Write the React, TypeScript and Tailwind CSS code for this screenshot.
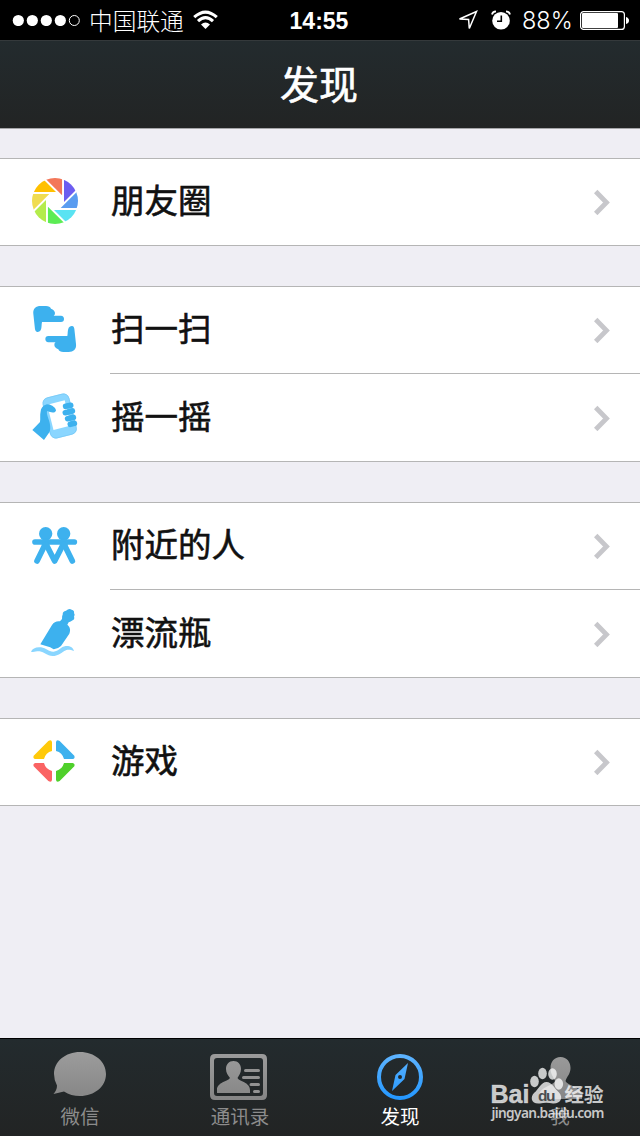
import type { ReactNode } from "react";

const PETALS = ["#6d5df0", "#5a9cf0", "#5ae3f2", "#5cec54", "#b4ec4c", "#f0dc50", "#ffc000", "#f37759"];

function Icon({ viewBox, children }: { viewBox: string; children: ReactNode }) {
  return (
    <svg viewBox={viewBox} className="h-12 w-12 shrink-0 overflow-visible">
      {children}
    </svg>
  );
}

function MomentsIcon() {
  return (
    <Icon viewBox="30 39 144 144">
      <clipPath id="disc">
        <circle cx="105" cy="108" r="69" />
      </clipPath>
      <g clipPath="url(#disc)">
        {PETALS.map((color, i) => (
          <path key={color} d="M27 3V-80H110Z" fill={color} transform={`translate(105 108) rotate(${i * 45})`} />
        ))}
      </g>
    </Icon>
  );
}

function ScanIcon() {
  const hand =
    "M40 72C38 56 48 48 62 48H78Q90 48 93 56Q104 60 105 69Q105 76 101 77H123Q132 78 132 87Q132 96 123 96H66C64 104 66 112 62 121Q58 127 51 126Q46 125 45 118Z";
  return (
    <Icon viewBox="30 48 144 144">
      <g fill="#3db1ee">
        <path d={hand} />
        <path d={hand} transform="rotate(180 104 117)" />
      </g>
    </Icon>
  );
}

function ShakeIcon() {
  return (
    <Icon viewBox="30 312 144 144">
      <g transform="rotate(-14 119 378)">
        <rect x="78" y="315" width="82" height="126" rx="18" fill="#8ad6ff" />
        <rect x="79" y="316" width="80" height="124" rx="17" fill="none" stroke="#74c6f4" strokeWidth="2" />
        <path d="M91 336H145V414H91Z" fill="#fff" />
      </g>
      <path
        d="M37 420L60 396C62 385 59 378 62 364C64 350 74 343 85 343C96 345 108 354 108 362C104 370 93 368 81 363C79 374 86 384 89 398C92 412 91 421 88 427L72 450Z"
        fill="#3db1ee"
      />
      <g stroke="#3db1ee" strokeWidth="17" strokeLinecap="round">
        <path d="M137 349L152 346" />
        <path d="M136 368L157 363" />
        <path d="M143 386L160 382" />
        <path d="M151 403L163 400" />
      </g>
    </Icon>
  );
}

function PeopleIcon() {
  return (
    <Icon viewBox="30 66 144 144">
      <g fill="#3db1ee">
        <circle cx="77" cy="101" r="20" />
        <circle cx="131" cy="101" r="20" />
        <path d="M68 116H86V130H68ZM122 116H140V130H122Z" />
        <path d="M65 130H89L84 150L76 146L67 150ZM119 130H143L141 150L132 146L124 150Z" />
      </g>
      <g stroke="#3db1ee" strokeWidth="17" strokeLinecap="round" strokeLinejoin="round" fill="none">
        <path d="M45 126H163" />
        <path d="M75 134L51 183" />
        <path d="M79 134L104 183L129 134" />
        <path d="M133 134L157 183" />
      </g>
    </Icon>
  );
}

function BottleIcon() {
  return (
    <Icon viewBox="30 330 144 144">
      <path
        d="M61 433L96 375C102 366 109 363 120 364L126 357C127 352 125 350 128 344C128 336 131 333 138 332Q147 324 155 329Q164 331 162 339Q166 344 162 350Q165 357 158 361Q152 366 146 367L142 374C151 381 152 391 148 401L123 438Q112 448 101 448C87 438 74 438 61 433Z"
        fill="#3db1ee"
      />
      <path
        d="M33 455C37 445 49 440 63 442C80 445 86 456 101 455C115 454 123 440 137 438C150 437 160 443 162 453C150 449 143 447 133 453C120 461 114 468 98 468C80 468 73 456 59 454C49 453 41 458 33 455Z"
        fill="#8ad6ff"
      />
    </Icon>
  );
}

function GamesIcon() {
  const piece = "M-6 -56V-30Q-25 -25 -30 -6H-56Q-64 -8 -61 -16L-17 -60Q-7 -66 -6 -56Z";
  return (
    <Icon viewBox="30 84 144 144">
      <g transform="translate(102 153)">
        <path d={piece} fill="#ffc90a" />
        <path d={piece} fill="#3db1ee" transform="scale(-1 1)" />
        <path d={piece} fill="#fa6363" transform="scale(1 -1)" />
        <path d={piece} fill="#4fd02b" transform="scale(-1 -1)" />
      </g>
    </Icon>
  );
}

const GROUPS = [
  [{ label: "朋友圈", icon: <MomentsIcon /> }],
  [
    { label: "扫一扫", icon: <ScanIcon /> },
    { label: "摇一摇", icon: <ShakeIcon /> },
  ],
  [
    { label: "附近的人", icon: <PeopleIcon /> },
    { label: "漂流瓶", icon: <BottleIcon /> },
  ],
  [{ label: "游戏", icon: <GamesIcon /> }],
];

function StatusBar() {
  return (
    <div className="grid h-10 grid-cols-[1fr_auto_1fr] items-center bg-black text-white">
      <div className="flex h-10 items-center pl-3">
        <svg viewBox="0 0 68 12" className="h-3 w-[68px]" fill="#fff">
          <circle cx="6.3" cy="6.5" r="5.6" />
          <circle cx="20.3" cy="6.5" r="5.6" />
          <circle cx="34.3" cy="6.5" r="5.6" />
          <circle cx="48.3" cy="6.5" r="5.6" />
          <circle cx="62.3" cy="6.5" r="5" fill="none" stroke="#fff" />
        </svg>
        <span className="ml-[9px] text-[23.7px] leading-10 font-light">中国联通</span>
        <svg viewBox="0 0 25 20" className="ml-[9px] h-5 w-[25px]" fill="none" stroke="#fff" strokeWidth="3.1">
          <path d="M1.2 7.2Q12.5 -3 23.8 7.2" />
          <path d="M5 11.2Q12.5 4.2 20 11.2" />
          <path d="M12.5 19L8 14.4Q12.5 10.6 17 14.4Z" fill="#fff" stroke="none" />
        </svg>
      </div>
      <span className="pt-0.5 pr-0.5 font-['Liberation_Sans',sans-serif] text-[23px] leading-[38px] font-bold">14:55</span>
      <div className="flex items-center justify-end pr-[11px]">
        <svg viewBox="0 0 20 21" className="h-[21px] w-5" fill="none" stroke="#fff" strokeWidth="1.5">
          <path d="M1.5 9L18.5 1.5L11.3 18.5L10.6 9.5Z" />
        </svg>
        <svg viewBox="0 0 20 20" className="ml-[13px] h-5 w-5">
          <circle cx="10" cy="10.8" r="8.8" fill="#fff" />
          <path d="M1 4.5Q1.5 1.5 5 1.3M15 1.3Q18.5 1.5 19 4.5" fill="none" stroke="#fff" strokeWidth="1.8" />
          <path d="M10.3 5.5V11.3H6" fill="none" stroke="#000" strokeWidth="1.6" />
        </svg>
        <span className="ml-[11px] w-[51px] pt-0.5 font-[Inter,sans-serif] text-[23.5px] leading-[38px] font-light">88%</span>
        <svg viewBox="0 0 49 19" className="ml-[7px] h-[19px] w-[49px]">
          <rect x="0.6" y="0.6" width="43.8" height="17.8" rx="3" fill="none" stroke="#fff" strokeWidth="1.2" />
          <rect x="2" y="2" width="36" height="15" rx="1" fill="#fff" />
          <path d="M46 6Q49 7 49 9.5Q49 12 46 13Z" fill="#fff" />
        </svg>
      </div>
    </div>
  );
}

function Tab({ label, active, children }: { label: string; active?: boolean; children: ReactNode }) {
  return (
    <div className="flex w-40 flex-col items-center">
      <svg viewBox="0 0 60 60" className="mt-1 h-[60px] w-[60px]">
        {children}
      </svg>
      <span className={active ? "text-[19.5px] leading-[26px] text-white" : "text-[19.5px] leading-[26px] text-[#8c8c8c]"}>
        {label}
      </span>
    </div>
  );
}

function TabBar() {
  return (
    <nav className="relative flex h-[98px] border-t border-black bg-linear-to-b from-[#232b2e] to-[#222424]">
      <svg className="absolute h-0 w-0">
        <linearGradient id="grey" x1="0" y1="0" x2="0" y2="60" gradientUnits="userSpaceOnUse">
          <stop offset="0" stopColor="#a0a0a0" />
          <stop offset="1" stopColor="#848484" />
        </linearGradient>
        <linearGradient id="blue" x1="0" y1="10" x2="0" y2="58" gradientUnits="userSpaceOnUse">
          <stop offset="0" stopColor="#60b5ff" />
          <stop offset="1" stopColor="#2196ff" />
        </linearGradient>
      </svg>
      <Tab label="微信">
        <path
          d="M30 9C44.5 9 56 18.500 56 31C56 43.500 44.500 53 30 53Q21 53 14 48.500L3.500 51Q7 47 7 42.500Q4 37 4 31C4 18.500 15.500 9 30 9Z"
          fill="url(#grey)"
        />
      </Tab>
      <Tab label="通讯录">
        <path
          fillRule="evenodd"
          d="M5 11H52Q57 11 57 16V52Q57 57 52 57H5Q0 57 0 52V16Q0 11 5 11ZM7 15Q4 15 4 18V50Q4 53 7 53H50Q53 53 53 50V18Q53 15 50 15Z"
          fill="url(#grey)"
        />
        <path
          d="M23.500 18C28 18 31 21.500 31 26C31 30 29 32 27.500 35C29 38.500 40 39 40 47V50H7V47C7 39 18 38.500 20 35C18 32 16 30 16 26C16 21.500 19 18 23.500 18Z"
          fill="url(#grey)"
        />
        <path d="M35.500 27.500H48.500M33.500 34.500H48.500M41 41.500H48.500M44.500 48.500H48.500" stroke="#929292" strokeWidth="3" strokeLinecap="round" />
      </Tab>
      <Tab label="发现" active>
        <circle cx="30" cy="34" r="21" fill="none" stroke="url(#blue)" strokeWidth="4" />
        <path
          fillRule="evenodd"
          d="M38 20L34.500 36L22 48L25.500 32ZM30 32A2 2 0 1 0 30 36A2 2 0 1 0 30 32Z"
          fill="url(#blue)"
        />
      </Tab>
      <Tab label="我">
        <path
          d="M30.500 14C37 14 40.500 19 40.500 25C40.500 31 37 33 35.500 38C38 43 52 44 52 53V56H9V53C9 44 23 43 25 38C23 33 20.500 31 20.500 25C20.500 19 24 14 30.500 14Z"
          fill="url(#grey)"
        />
      </Tab>
      <svg viewBox="0 0 120 60" className="absolute top-[26px] left-[488px] h-[60px] w-[120px]" fill="#fff" fillOpacity="0.75">
        <text
          x="2.500"
          y="37.500"
          fontSize="26"
          fontWeight="700"
          fontFamily="Liberation Sans"
          textLength="39"
          lengthAdjust="spacingAndGlyphs"
          stroke="#fff"
          strokeOpacity="0.5"
          strokeWidth="0.6"
        >
          Bai
        </text>
        <ellipse cx="46.500" cy="16.500" rx="4.300" ry="5.700" />
        <ellipse cx="54.500" cy="8.500" rx="4.300" ry="5.700" />
        <ellipse cx="64.500" cy="9" rx="4.300" ry="5.700" />
        <ellipse cx="70.800" cy="19" rx="4.300" ry="5.700" />
        <path d="M58.500 17C64 17 67 24 71 27.500C76 33 72 39 65 38.500Q58 37 52 38.500C43 39.500 42 32 46 28C51 24 53 17 58.500 17Z" />
        <text x="50" y="35.500" fontSize="15.500" fontWeight="700" fontFamily="Liberation Sans" fill="#4a4e50" fillOpacity="1" textLength="17.500">
          du
        </text>
        <text x="76.500" y="36.500" fontSize="19.500" fontWeight="700" fontFamily="Noto Sans CJK SC" textLength="39">
          经验
        </text>
        <text x="3.500" y="53" fontSize="13.700" fontWeight="600" fontFamily="Noto Sans" textLength="113">
          jingyan.baidu.com
        </text>
      </svg>
    </nav>
  );
}

export default function App() {
  return (
    <div className="flex h-[1136px] w-[640px] flex-col bg-[#efeef4] font-['Noto_Sans_CJK_SC',sans-serif]">
      <StatusBar />
      <header className="flex h-[88px] items-center justify-center border-t border-[#34393b] bg-linear-to-b from-[#232b2e] to-[#222424]">
        <h1 className="pr-0.5 pb-1.5 text-[39px] leading-[80px] text-white [-webkit-text-stroke:0.6px_#fff]">发现</h1>
      </header>
      <main className="flex flex-1 flex-col gap-10 border-t border-[#a5a5a8] pt-[29px]">
        {GROUPS.map((rows) => (
          <section
            key={rows[0].label}
            className="bg-white shadow-[inset_0_1px_0_#b5b5b5,inset_0_-1px_0_#b5b5b5]"
          >
            {rows.map((row, i) => (
              <div key={row.label} className="flex h-[88px] items-center pl-[30px]">
                {row.icon}
                <div
                  className={
                    i < rows.length - 1
                      ? "ml-8 flex h-full flex-1 items-center justify-between pr-[30px] shadow-[inset_0_-1px_0_#b5b5b5]"
                      : "ml-8 flex h-full flex-1 items-center justify-between pr-[30px]"
                  }
                >
                  <span className="pb-1.5 pl-px text-[33.5px] leading-[48px] text-[#111] [-webkit-text-stroke:0.6px_#111]">
                    {row.label}
                  </span>
                  <svg viewBox="0 0 16 26" className="h-[26px] w-4" fill="none" stroke="#c7c7cb" strokeWidth="4.800">
                    <path d="M1.700 2.500L12.500 13.500L1.700 24.500" />
                  </svg>
                </div>
              </div>
            ))}
          </section>
        ))}
      </main>
      <TabBar />
    </div>
  );
}
